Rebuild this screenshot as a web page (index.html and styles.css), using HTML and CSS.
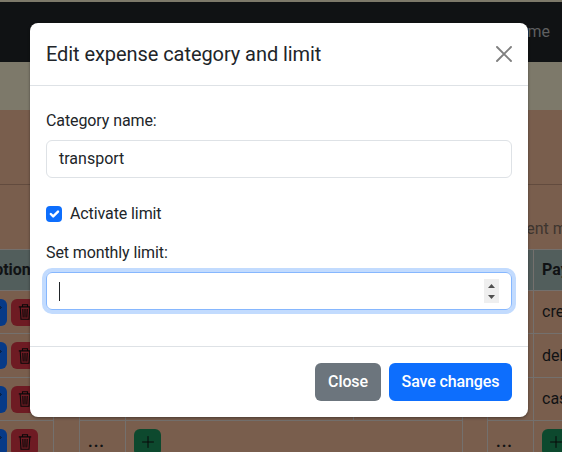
FILE: index.html
```html
<!DOCTYPE html>
<html lang="en">
<head>
<meta charset="utf-8">
<title>Settings</title>
<link rel="stylesheet" href="styles.css">
</head>
<body>
<svg class="defs" aria-hidden="true">
  <symbol id="trash" viewBox="0 0 16 16"><path d="M1.8 2.9h12.4M5.5 2.7V.7h5v2M3.2 3.2l.8 12h8l.8-12M5.8 5l.4 8.5M8 5v8.500M10.200 5l-.4 8.500" fill="none" stroke="#090909" stroke-width="1.1"/></symbol>
  <symbol id="plus" viewBox="0 0 16 16"><path d="M8 2.500v11M2.500 8h11" fill="none" stroke="#090909" stroke-width="1" stroke-linecap="round"/></symbol>
  <symbol id="pencil" viewBox="0 0 16 16"><path d="M12.500 1l2.500 2.500L5 13.500l-4 1.500 1.500-4z" fill="none" stroke="#090909"/></symbol>
</svg>
<div class="page">
  <nav class="navbar"><span>Home</span></nav>
  <main class="content">
    <div class="heading"></div>
    <div class="caption">Payment methods</div>
    <div class="tables">
      <section class="table options">
        <div class="row head"><b>Options</b></div>
        <div class="row"><span class="btn edit"><svg><use href="#pencil"/></svg></span><span class="btn del"><svg><use href="#trash"/></svg></span></div>
        <div class="row"><span class="btn edit"><svg><use href="#pencil"/></svg></span><span class="btn del"><svg><use href="#trash"/></svg></span></div>
        <div class="row"><span class="btn edit"><svg><use href="#pencil"/></svg></span><span class="btn del"><svg><use href="#trash"/></svg></span></div>
        <div class="row"><span class="btn edit"><svg><use href="#pencil"/></svg></span><span class="btn del"><svg><use href="#trash"/></svg></span></div>
      </section>
      <section class="table">
        <div class="row head"></div>
        <div class="row"></div><div class="row"></div>
        <div class="row"><b class="num"></b><div class="name"></div></div>
        <div class="row"><b class="num">...</b><div class="cell"><span class="btn add"><svg><use href="#plus"/></svg></span></div></div>
      </section>
      <section class="table">
        <div class="row head"><b class="num"></b><div class="cell"><b>Payment</b></div></div>
        <div class="row"><b class="num"></b><div class="cell">credit card</div></div>
        <div class="row"><b class="num"></b><div class="cell">debit card</div></div>
        <div class="row"><b class="num"></b><div class="cell">cash</div></div>
        <div class="row"><b class="num">...</b><div class="cell"><span class="btn add"><svg><use href="#plus"/></svg></span></div></div>
      </section>
    </div>
  </main>
</div>
<div class="modal" role="dialog">
  <header class="modal-header">
    <h5>Edit expense category and limit</h5>
    <svg class="close" viewBox="0 0 16 16"><path d="M1 1l14 14M15 1L1 15" stroke="#7f7f7f" stroke-width="1.9" stroke-linecap="round"/></svg>
  </header>
  <div class="modal-body">
    <label>Category name:</label>
    <div class="field">transport</div>
    <div class="check"><span class="box"><svg viewBox="0 0 20 20"><path d="M6 10l3 3 6-6" fill="none" stroke="#fff" stroke-width="3" stroke-linecap="round" stroke-linejoin="round"/></svg></span>Activate limit</div>
    <label>Set monthly limit:</label>
    <div class="field focus"><span class="caret"></span><svg class="spin" viewBox="0 0 15 24"><path fill="#505050" d="M4 9l3.500-4L11 9zM4 16h7l-3.500 4z"/></svg></div>
  </div>
  <footer class="modal-footer"><span class="action gray">Close</span><span class="action blue">Save changes</span></footer>
</div>
</body>
</html>
```

FILE: styles.css
```css
* { box-sizing: border-box; }
body { margin: 0; overflow: hidden; font: 400 16px/24px Roboto, sans-serif; color: #212529; }
.defs { display: none; }
.page { height: 452px; padding-top: 2px; overflow: hidden; background: #7d796a; color: #101214; }
.navbar { height: 60px; background: #101214; color: #5e5f60; display: flex; justify-content: flex-end; padding: 18px 12px 0 0; }
.content { height: 342px; margin-top: 48px; background: #795e4d; }
.heading { height: 75px; border-bottom: 1px solid #624b3e; }
.caption { height: 64px; padding: 32px 0 0 486px; white-space: nowrap; color: #3e352f; }
.tables { display: grid; grid-template-columns: 54px 384px 120px; column-gap: 25px; }
.table { border: 1px solid #74706d; border-top: 0; }
.table:last-child { margin-left: -1px; }
.options { border-left: 0; }
.row { height: 43px; display: flex; border-top: 1px solid #74706d; white-space: nowrap; }
.row:nth-child(2) { height: 43px; }
.row.head { height: 41px; background: #525e5c; }
.row:nth-child(3) { height: 44px; }
.options .row { justify-content: flex-end; align-items: center; gap: 4px; padding-right: 15px; }
.options .row.head { padding-right: 14px; }
.num { flex: none; width: 46px; padding: 9px 8px; letter-spacing: 1px; border-right: 1px solid #74706d; }
.name { width: 228px; border-right: 1px solid #74706d; }
.cell { display: flex; align-items: center; padding-left: 8px; }
.btn { flex: none; width: 27px; height: 27px; border-radius: 6px; display: flex; align-items: center; justify-content: center; }
.btn svg { width: 16px; height: 16px; }
.edit { background: #073a87; }
.del { background: #6e1b23; }
.add { background: #0d492e; }
.modal { position: absolute; left: 30px; top: 23px; width: 498px; height: 394px; border-radius: 8px; background: #fff; box-shadow: 0 1px 3px #0006; }
.modal-header { height: 63px; padding: 0 16px; display: flex; align-items: center; justify-content: space-between; border-bottom: 1px solid #dee2e6; }
h5 { margin: 0; font-size: 20px; line-height: 30px; font-weight: 450; letter-spacing: -.07px; }
.close { width: 16px; height: 16px; }
.modal-body { padding: 23px 16px 0; height: 260px; }
label, .check { letter-spacing: -.1px; }
label { display: block; height: 24px; }
.field { height: 38px; margin-top: 7px; padding: 6px 12px; border: 1px solid #dee2e6; border-radius: 6px; }
.check { height: 24px; margin: 24px 0 15px; display: flex; align-items: center; gap: 8px; }
.box { width: 16px; height: 16px; border-radius: 4px; background: #0d6efd; }
.box svg { display: block; }
.focus { display: flex; justify-content: space-between; border-color: #86b7fe; box-shadow: 0 0 0 4px #c2dbfe; }
.caret { width: 1px; height: 19px; margin-top: 3px; background: #212529; }
.spin { width: 15px; height: 24px; background: #efefef; }
.modal-footer { height: 71px; padding: 16px; display: flex; justify-content: flex-end; gap: 8px; border-top: 1px solid #dee2e6; }
.action { height: 38px; padding: 7px 0; text-align: center; border-radius: 6px; color: #fff; font-weight: 500; letter-spacing: -.12px; white-space: nowrap; }
.gray { width: 66px; background: #6c757d; }
.blue { width: 123px; background: #0d6efd; }
```
